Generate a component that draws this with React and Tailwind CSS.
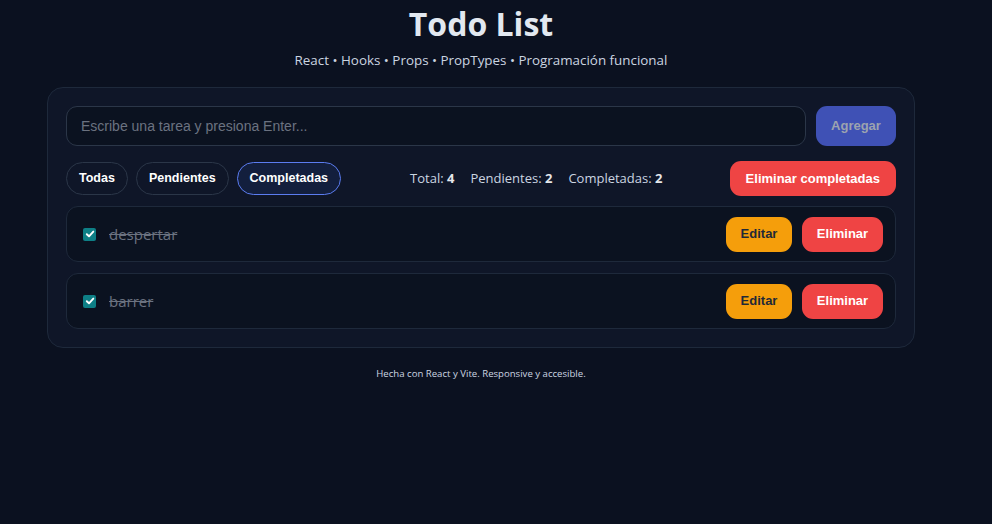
import { useState } from 'react'

const initialTodos = [
  { id: 1, text: 'despertar', done: true },
  { id: 2, text: 'barrer', done: true },
]

function CheckBox({ checked }) {
  return (
    <span className="flex h-[13px] w-[13px] items-center justify-center rounded-[2px] bg-[#0e7f86]">
      {checked && (
        <svg width="10" height="10" viewBox="0 0 10 10" fill="none">
          <path d="M1.8 5.2 L4 7.3 L8.3 2.6" stroke="white" strokeWidth="1.9" strokeLinecap="round" strokeLinejoin="round" />
        </svg>
      )}
    </span>
  )
}

export default function App() {
  const [todos] = useState(initialTodos)
  const [filter, setFilter] = useState('Completadas')
  const [text, setText] = useState('')

  const sans = { fontFamily: '"Open Sans", "Noto Sans", sans-serif' }
  const arial = { fontFamily: '"Liberation Sans", Arial, sans-serif' }

  return (
    <main className="min-h-screen bg-[#0b1120] text-white" style={sans}>
      <div className="w-[962px] flex flex-col items-center">
        <h1 className="mt-[4px] text-[32px] font-bold leading-[40px] text-[#e2e8f0]">Todo List</h1>
        <p className="mt-[7px] text-[13.4px] leading-[18px] text-[#cbd5e1]">
          React • Hooks • Props • PropTypes • Programación funcional
        </p>

        <section className="mt-[18px] w-[868px] rounded-[16px] border border-[#1e293b] bg-[#0f1628] p-[18px]">
          <div className="flex gap-[10px]">
            <input
              className="h-[40px] flex-1 rounded-[11px] border border-[#2b3648] bg-[#0b1220] px-[14px] text-[14px] text-white placeholder:text-[#6b7280] outline-none"
              style={arial}
              placeholder="Escribe una tarea y presiona Enter..."
              value={text}
              onChange={(e) => setText(e.target.value)}
            />
            <button className="h-[40px] w-[80px] rounded-[11px] bg-[#3f51b5] text-[13px] font-bold text-[#9ca3af]" style={arial}>
              Agregar
            </button>
          </div>

          <div className="mt-[15px] flex items-center">
            <div className="flex gap-[8px]" style={arial}>
              {['Todas', 'Pendientes', 'Completadas'].map((f) => (
                <button
                  key={f}
                  onClick={() => setFilter(f)}
                  className={
                    filter === f
                      ? 'h-[33px] rounded-full border border-[#5b7cf0] bg-[#131f3d] px-[12px] text-[12.5px] font-bold text-white'
                      : 'h-[33px] rounded-full border border-[#2b3648] bg-transparent px-[12px] text-[12.5px] font-bold text-white'
                  }
                >
                  {f}
                </button>
              ))}
            </div>
            <div className="ml-[69px] flex gap-[16px] text-[13px] text-[#cbd5e1]">
              <span>Total: <b className="text-[#e5e7eb]">4</b></span>
              <span>Pendientes: <b className="text-[#e5e7eb]">2</b></span>
              <span>Completadas: <b className="text-[#e5e7eb]">2</b></span>
            </div>
            <button className="ml-auto h-[35px] rounded-[11px] bg-[#ef4444] px-[16px] text-[13px] font-bold text-white" style={arial}>
              Eliminar completadas
            </button>
          </div>

          <ul className="mt-[10px] flex flex-col gap-[11px]">
            {todos.map((t) => (
              <li
                key={t.id}
                className="flex h-[56px] items-center rounded-[12px] border border-[#1e293b] bg-[#0b1220] pl-[16px] pr-[12px]"
              >
                <CheckBox checked={t.done} />
                <span className="ml-[13px] text-[15px] text-[#6b7280] line-through">{t.text}</span>
                <div className="ml-auto flex gap-[10px]" style={arial}>
                  <button className="h-[35px] w-[66px] rounded-[11px] bg-[#f59e0b] text-[13px] font-bold text-[#1f2937]">
                    Editar
                  </button>
                  <button className="h-[35px] w-[81px] rounded-[11px] bg-[#ef4444] text-[13px] font-bold text-white">
                    Eliminar
                  </button>
                </div>
              </li>
            ))}
          </ul>
        </section>

        <footer className="mt-[19px] text-[9.6px] text-[#cbd5e1]">
          Hecha con React y Vite. Responsive y accesible.
        </footer>
      </div>
    </main>
  )
}
